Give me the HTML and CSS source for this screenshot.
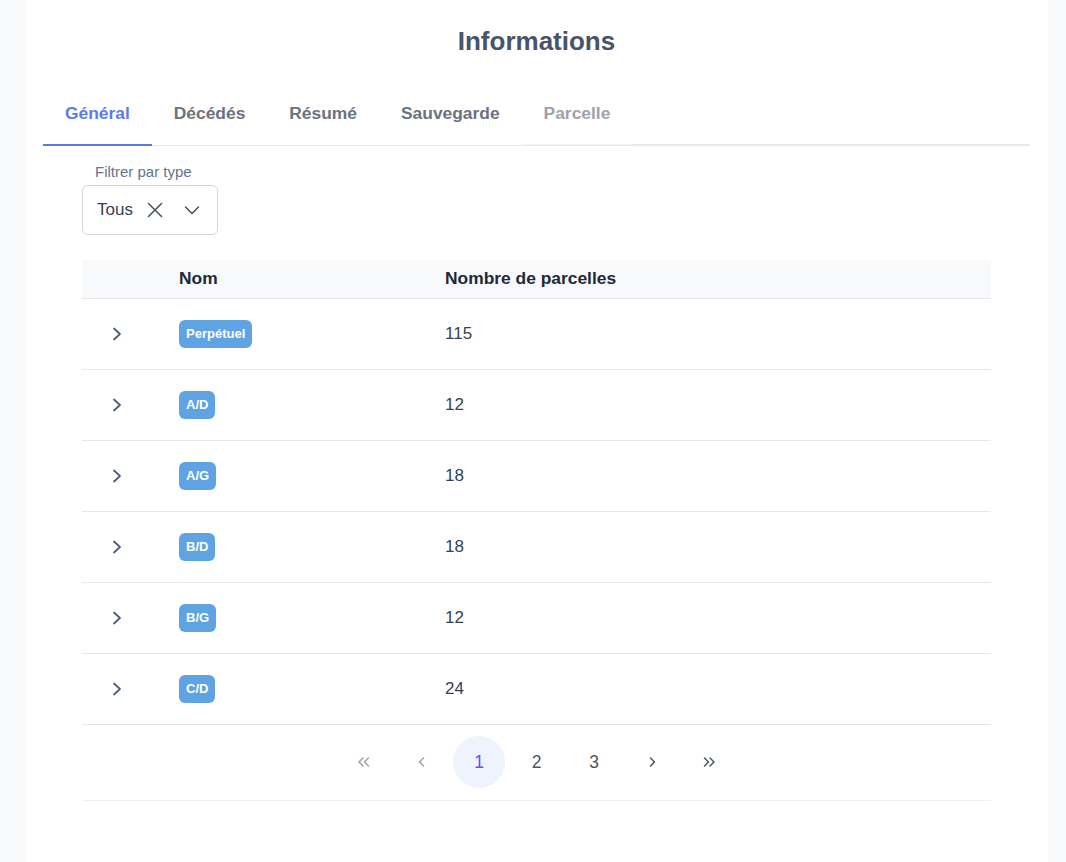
FILE: index.html
```html
<!DOCTYPE html>
<html lang="fr">
<head>
<meta charset="utf-8">
<title>Informations</title>
<link rel="stylesheet" href="styles.css">
</head>
<body>
<div class="page">
  <main class="card">
    <h1 class="title">Informations</h1>
    <nav class="tabs">
      <a class="tab active">Général</a>
      <a class="tab">Décédés</a>
      <a class="tab">Résumé</a>
      <a class="tab">Sauvegarde</a>
      <a class="tab disabled">Parcelle</a>
      <span class="tab-rest"></span>
    </nav>
    <section class="content">
      <div class="filter">
        <label class="filter-label">Filtrer par type</label>
        <div class="select">
          <span class="select-value">Tous</span>
          <svg class="ico-x" width="18" height="18" viewBox="0 0 18 18"><path d="M2.5 2.5 L15.5 15.5 M15.5 2.5 L2.5 15.5" stroke="#4b5563" stroke-width="1.6" fill="none" stroke-linecap="round"/></svg>
          <svg class="ico-down" width="18" height="18" viewBox="0 0 18 18"><path d="M2.5 6 L9 12.5 L15.5 6" stroke="#4b5563" stroke-width="1.6" fill="none" stroke-linecap="round" stroke-linejoin="round"/></svg>
        </div>
      </div>
      <table class="table">
        <thead>
          <tr><th class="c-exp"></th><th class="c-name">Nom</th><th class="c-num">Nombre de parcelles</th></tr>
        </thead>
        <tbody>
          <tr><td class="c-exp"><svg width="12" height="14" viewBox="0 0 12 14"><path d="M3 1.5 L9 7 L3 12.5" stroke="#4a5b78" stroke-width="1.7" fill="none" stroke-linecap="round" stroke-linejoin="round"/></svg></td><td class="c-name"><span class="badge">Perpétuel</span></td><td class="c-num">115</td></tr>
          <tr><td class="c-exp"><svg width="12" height="14" viewBox="0 0 12 14"><path d="M3 1.5 L9 7 L3 12.5" stroke="#4a5b78" stroke-width="1.7" fill="none" stroke-linecap="round" stroke-linejoin="round"/></svg></td><td class="c-name"><span class="badge">A/D</span></td><td class="c-num">12</td></tr>
          <tr><td class="c-exp"><svg width="12" height="14" viewBox="0 0 12 14"><path d="M3 1.5 L9 7 L3 12.5" stroke="#4a5b78" stroke-width="1.7" fill="none" stroke-linecap="round" stroke-linejoin="round"/></svg></td><td class="c-name"><span class="badge">A/G</span></td><td class="c-num">18</td></tr>
          <tr><td class="c-exp"><svg width="12" height="14" viewBox="0 0 12 14"><path d="M3 1.5 L9 7 L3 12.5" stroke="#4a5b78" stroke-width="1.7" fill="none" stroke-linecap="round" stroke-linejoin="round"/></svg></td><td class="c-name"><span class="badge">B/D</span></td><td class="c-num">18</td></tr>
          <tr><td class="c-exp"><svg width="12" height="14" viewBox="0 0 12 14"><path d="M3 1.5 L9 7 L3 12.5" stroke="#4a5b78" stroke-width="1.7" fill="none" stroke-linecap="round" stroke-linejoin="round"/></svg></td><td class="c-name"><span class="badge">B/G</span></td><td class="c-num">12</td></tr>
          <tr><td class="c-exp"><svg width="12" height="14" viewBox="0 0 12 14"><path d="M3 1.5 L9 7 L3 12.5" stroke="#4a5b78" stroke-width="1.7" fill="none" stroke-linecap="round" stroke-linejoin="round"/></svg></td><td class="c-name"><span class="badge">C/D</span></td><td class="c-num">24</td></tr>
        </tbody>
      </table>
      <div class="pager">
        <span class="pg muted"><svg width="16" height="14" viewBox="0 0 16 14"><path d="M7 3 L3 7 L7 11 M12.5 3 L8.5 7 L12.5 11" stroke="#9ca3af" stroke-width="1.5" fill="none" stroke-linecap="round" stroke-linejoin="round"/></svg></span>
        <span class="pg muted"><svg width="10" height="14" viewBox="0 0 10 14"><path d="M6.5 3 L2.5 7 L6.5 11" stroke="#9ca3af" stroke-width="1.5" fill="none" stroke-linecap="round" stroke-linejoin="round"/></svg></span>
        <span class="pg current">1</span>
        <span class="pg">2</span>
        <span class="pg">3</span>
        <span class="pg"><svg width="10" height="14" viewBox="0 0 10 14"><path d="M3.5 3 L7.5 7 L3.5 11" stroke="#4b5563" stroke-width="1.5" fill="none" stroke-linecap="round" stroke-linejoin="round"/></svg></span>
        <span class="pg"><svg width="16" height="14" viewBox="0 0 16 14"><path d="M3.5 3 L7.5 7 L3.5 11 M9 3 L13 7 L9 11" stroke="#4b5563" stroke-width="1.5" fill="none" stroke-linecap="round" stroke-linejoin="round"/></svg></span>
      </div>
    </section>
  </main>
</div>
</body>
</html>
```

FILE: styles.css
```css
* { box-sizing: border-box; }
html, body { margin: 0; padding: 0; }
body {
  background: #f8f9fb;
  font-family: "Liberation Sans", Arial, sans-serif;
  color: #334155;
}
.page {
  padding: 0 18px 0 26px;
  min-height: 862px;
}
.card {
  background: #ffffff;
  min-height: 862px;
  padding: 24px 18px 40px 17px;
}
.title {
  margin: 0;
  text-align: center;
  font-size: 26px;
  line-height: 34px;
  font-weight: 700;
  color: #475569;
}
.tabs {
  display: flex;
  margin-top: 39px;
  border-bottom: 1px solid #e5e7eb;
  height: 49px;
}
.tab {
  display: block;
  padding: 0 22px;
  font-size: 17.4px;
  font-weight: 700;
  line-height: 32px;
  color: #6b7280;
  position: relative;
}
.tab.active { color: #5b7bea; }
.tab.active::after {
  content: "";
  position: absolute;
  left: 0; right: 0; bottom: -1px;
  height: 2px;
  background: #5b7bea;
}
.tab.disabled {
  color: #a1a1aa;
  border-bottom: 1px solid #f3f4f6;
}
.tab-rest {
  flex: 1;
  border-bottom: 1px solid #e5e7eb;
}
.content {
  padding: 17px 39px 0 39px;
}
.filter {
  display: flex;
  flex-direction: column;
  align-items: flex-start;
}
.filter-label {
  font-size: 15px;
  color: #64748b;
  line-height: 18px;
  padding-left: 13px;
  margin-bottom: 4px;
}
.select {
  display: flex;
  align-items: center;
  height: 50px;
  width: 136px;
  border: 1px solid #d1d5db;
  border-radius: 6px;
  padding: 0 14px;
}
.select-value {
  font-size: 17px;
  color: #374151;
}
.ico-x { margin-left: 13px; }
.ico-down { margin-left: 19px; }
.table {
  width: 100%;
  margin-top: 25px;
  border-collapse: collapse;
}
.table th {
  background: #f8f9fb;
  text-align: left;
  font-size: 17.4px;
  font-weight: 700;
  color: #1f2937;
  height: 38px;
  border-bottom: 1px solid #e5e7eb;
  padding: 0;
}
.table td {
  height: 71px;
  border-bottom: 1px solid #e5e7eb;
  padding: 0;
  font-size: 17px;
  color: #334155;
}
.c-exp { width: 97px; padding-left: 29px !important; }
.table td.c-exp svg { display: block; }
.c-name { width: 266px; }
.badge {
  display: inline-block;
  background: #5fa3e3;
  color: #ffffff;
  font-size: 13px;
  font-weight: 700;
  line-height: 28px;
  height: 28px;
  padding: 0 7px;
  border-radius: 6px;
  vertical-align: middle;
}
.pager {
  display: flex;
  justify-content: center;
  align-items: center;
  gap: 5.5px;
  height: 76px;
  border-bottom: 1px solid #eef0f3;
}
.pg {
  width: 52px;
  height: 52px;
  border-radius: 50%;
  display: flex;
  align-items: center;
  justify-content: center;
  font-size: 17.5px;
  color: #4b5563;
}
.pg.current {
  background: #eef3fd;
  color: #6b4ee6;
}
```
